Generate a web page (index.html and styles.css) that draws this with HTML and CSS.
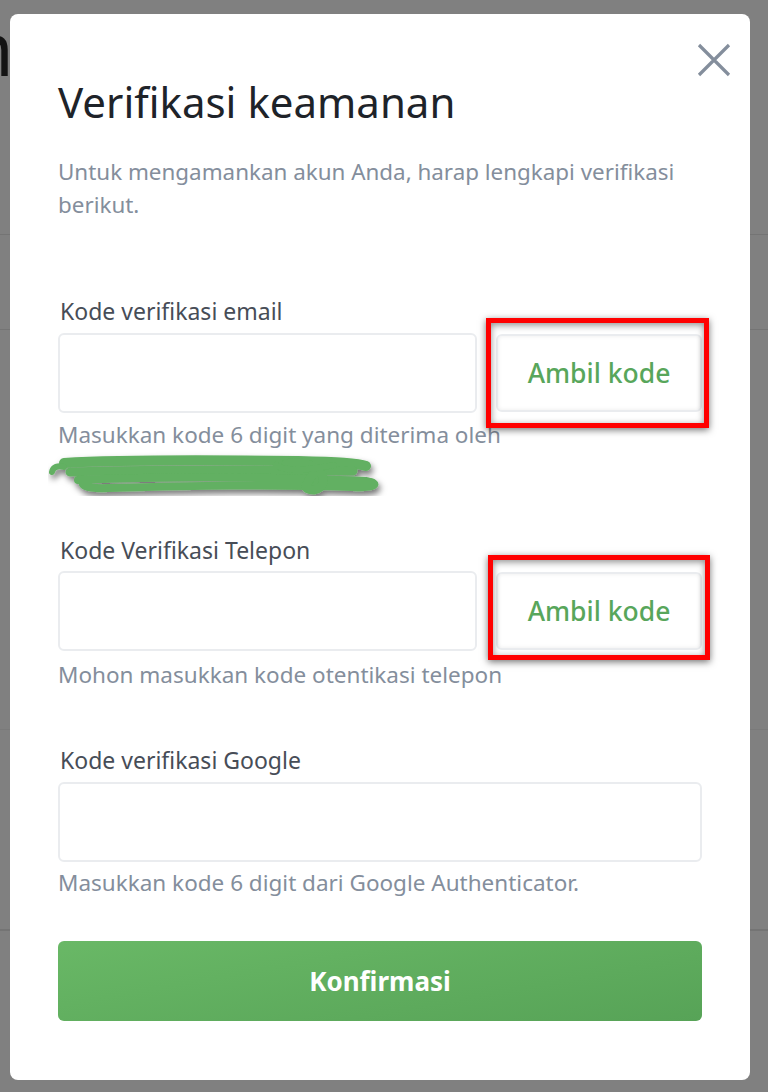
FILE: index.html
```html
<!DOCTYPE html>
<html lang="id">
<head>
<meta charset="utf-8">
<title>Verifikasi keamanan</title>
<link rel="stylesheet" href="styles.css">
</head>
<body>
<div class="page">
  <div class="page-head"><span class="page-title">n</span></div>
  <div class="page-row r1"></div>
  <div class="page-row r2"></div>
  <div class="page-row r3"></div>
  <div class="page-row r4"></div>
</div>

<div class="modal">
  <button class="close" aria-label="Tutup">
    <svg width="34" height="34" viewBox="0 0 34 34"><path d="M2 2 L32 32 M32 2 L2 32" stroke="#848e9c" stroke-width="3.2" fill="none"/></svg>
  </button>
  <h1 class="title">Verifikasi keamanan</h1>
  <p class="subtitle">Untuk mengamankan akun Anda, harap lengkapi verifikasi berikut.</p>

  <div class="field f-email">
    <label class="label">Kode verifikasi email</label>
    <div class="row">
      <input class="input" type="text">
      <div class="btn-wrap">
        <button class="get-code">Ambil kode</button>
        <span class="mark mark1"></span>
      </div>
    </div>
    <p class="hint">Masukkan kode 6 digit yang diterima oleh</p>
    <div class="scribble">
      <svg width="340" height="46" viewBox="0 0 340 46">
        <defs>
          <filter id="sh" x="-10%" y="-50%" width="120%" height="220%">
            <feDropShadow dx="2" dy="4" stdDeviation="3" flood-color="#000" flood-opacity="0.55"/>
          </filter>
        </defs>
        <g filter="url(#sh)" fill="none" stroke="#62b062" stroke-linecap="round" stroke-linejoin="round">
          <path d="M16 13 C80 9 170 10 250 11 C290 12 310 13 318 16" stroke-width="10"/>
          <path d="M22 22 C100 19 200 20 305 21" stroke-width="9"/>
          <path d="M30 30 C120 26 230 27 318 31 C334 34 326 38 305 37 C220 34 140 36 60 38 C36 39 30 34 38 30" stroke-width="8"/>
          <path d="M4 22 C5 17 10 15 16 17" stroke-width="6"/>
          <path d="M238 14 C256 10 272 16 264 26 C258 34 254 40 266 40 C276 38 278 28 272 22" stroke-width="9"/>
          <path d="M228 15 C236 22 262 20 286 15" stroke-width="6"/>
        </g>
      </svg>
    </div>
  </div>

  <div class="field f-phone">
    <label class="label">Kode Verifikasi Telepon</label>
    <div class="row">
      <input class="input" type="text">
      <div class="btn-wrap">
        <button class="get-code">Ambil kode</button>
        <span class="mark mark2"></span>
      </div>
    </div>
    <p class="hint">Mohon masukkan kode otentikasi telepon</p>
  </div>

  <div class="field f-google">
    <label class="label">Kode verifikasi Google</label>
    <input class="input wide" type="text">
    <p class="hint">Masukkan kode 6 digit dari Google Authenticator.</p>
  </div>

  <button class="confirm">Konfirmasi</button>
</div>
</body>
</html>
```

FILE: styles.css
```css
* { box-sizing: border-box; }
html, body { margin: 0; padding: 0; }
body {
  width: 768px;
  height: 1092px;
  overflow: hidden;
  background: #808080;
  font-family: "Noto Sans", "Open Sans", sans-serif;
  position: relative;
}

/* dimmed page behind the dialog */
.page { height: 1092px; }
.page-head { height: 235px; border-bottom: 1px solid #747474; padding-top: 8px; }
.page-title {
  display: block;
  margin-left: -32px;
  font-size: 74px;
  line-height: 80px;
  color: #141414;
}
.page-row { border-bottom: 1px solid #747474; }
.page-row.r1 { height: 95px; }
.page-row.r2 { height: 400px; border-bottom-color: #7a7a7a; }
.page-row.r3 { height: 200px; }

/* dialog */
.modal {
  position: absolute;
  left: 10px;
  top: 14px;
  width: 740px;
  height: 1066px;
  background: #fff;
  border-radius: 8px;
  padding: 62px 48px 0 48px;
}
.close {
  position: absolute;
  right: 19px;
  top: 29px;
  width: 34px;
  height: 34px;
  padding: 0;
  border: 0;
  background: none;
}
.close svg { display: block; }

.title {
  margin: 0;
  font-size: 42px;
  line-height: 52px;
  font-weight: 400;
  color: #1e2329;
}
.subtitle {
  margin: 27px 0 0 0;
  font-size: 22.4px;
  line-height: 33px;
  color: #848e9c;
  width: 644px;
}

.f-email { margin-top: 76px; }
.f-phone { margin-top: 40px; }
.f-google { margin-top: 57px; }

.label {
  display: block;
  margin-left: 2px;
  font-size: 23px;
  line-height: 28px;
  color: #474d57;
  margin-bottom: 8px;
}
.f-phone .label { margin-bottom: 7px; }
.row { display: flex; gap: 19px; align-items: center; }
.input {
  display: block;
  width: 419px;
  height: 80px;
  border: 2px solid #eaecef;
  border-radius: 6px;
  background: #fff;
  outline: none;
}
.input.wide { width: 644px; }

.btn-wrap { position: relative; width: 206px; height: 78px; }
.get-code {
  display: block;
  width: 206px;
  height: 78px;
  background: #fff;
  border: 2px solid #eaecef;
  border-radius: 6px;
  color: #58a65b;
  font-family: inherit;
  font-size: 26.5px;
  font-weight: 500;
  box-shadow: inset 0 0 4px rgba(0,0,0,0.08);
}
.mark {
  position: absolute;
  border: 5px solid #ff0000;
  box-shadow: 0 2px 7px rgba(0,0,0,0.55), inset 0 2px 7px rgba(0,0,0,0.45);
  pointer-events: none;
}
.mark1 { left: -10px; right: -7px; top: -16px; bottom: -16px; }
.mark2 { left: -8px; right: -8px; top: -17px; bottom: -10px; }

.hint {
  margin: 8px 0 0 0;
  font-size: 22.5px;
  line-height: 28px;
  color: #848e9c;
}
.f-phone .hint { margin-top: 10px; }
.f-google .hint { margin-top: 7px; }
.scribble { height: 46px; margin-left: -10px; margin-top: 1px; }
.scribble svg { display: block; }

.confirm {
  display: block;
  width: 644px;
  height: 80px;
  margin-top: 44px;
  border: 0;
  border-radius: 6px;
  background: linear-gradient(170deg, #69b866 0%, #57a357 100%);
  color: #fff;
  font-family: inherit;
  font-size: 26px;
  font-weight: 700;
}
```
